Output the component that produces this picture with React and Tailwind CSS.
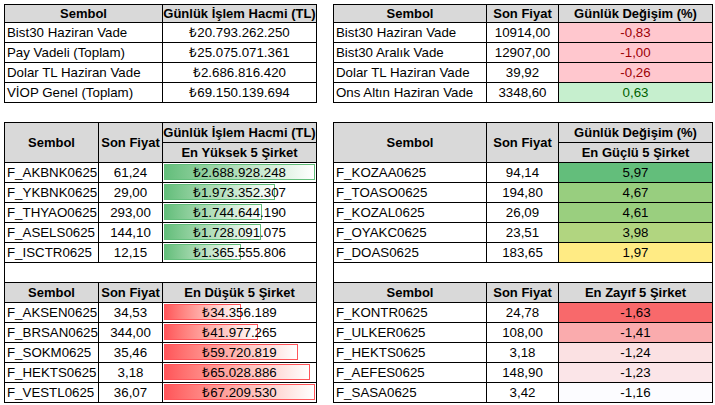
import React from "react";

const FONT = { fontFamily: '"Liberation Sans", Arial, sans-serif' };

function C({ children, className = "" }) {
  return (
    <div className={`border-r border-b border-black flex items-center overflow-hidden whitespace-nowrap ${className}`}>
      {children}
    </div>
  );
}

function H({ children, className = "" }) {
  return (
    <C className={`bg-[#d9d9d9] justify-center font-bold text-[13px] ${className}`}>{children}</C>
  );
}

function Bar({ value, max, kind, text }) {
  const w = Math.round((value / max) * 151);
  const green = kind === "green";
  return (
    <C className="relative justify-center">
      <div
        className={
          green
            ? "absolute left-[1px] top-[1px] h-[16px] border border-[#63be7b] bg-gradient-to-r from-[#63be7b] to-white"
            : "absolute left-[1px] top-[1px] h-[16px] border border-[#ff555a] bg-gradient-to-r from-[#ff555a] to-white"
        }
        style={{ width: w }}
      />
      <span className="relative">{text}</span>
    </C>
  );
}

const topLeft = [
  ["Bist30 Haziran Vade", "₺20.793.262.250"],
  ["Pay Vadeli (Toplam)", "₺25.075.071.361"],
  ["Dolar TL Haziran Vade", "₺2.686.816.420"],
  ["VİOP Genel (Toplam)", "₺69.150.139.694"],
];

const topRight = [
  ["Bist30 Haziran Vade", "10914,00", "-0,83", false],
  ["Bist30 Aralık Vade", "12907,00", "-1,00", false],
  ["Dolar TL Haziran Vade", "39,92", "-0,26", false],
  ["Ons Altın Haziran Vade", "3348,60", "0,63", true],
];

const high = [
  ["F_AKBNK0625", "61,24", 2688928248, "₺2.688.928.248"],
  ["F_YKBNK0625", "29,00", 1973352307, "₺1.973.352.307"],
  ["F_THYAO0625", "293,00", 1744644190, "₺1.744.644.190"],
  ["F_ASELS0625", "144,10", 1728091075, "₺1.728.091.075"],
  ["F_ISCTR0625", "12,15", 1365555806, "₺1.365.555.806"],
];

const low = [
  ["F_AKSEN0625", "34,53", 34356189, "₺34.356.189"],
  ["F_BRSAN0625", "344,00", 41977265, "₺41.977.265"],
  ["F_SOKM0625", "35,46", 59720819, "₺59.720.819"],
  ["F_HEKTS0625", "3,18", 65028886, "₺65.028.886"],
  ["F_VESTL0625", "36,07", 67209530, "₺67.209.530"],
];

const strong = [
  ["F_KOZAA0625", "94,14", "5,97", "bg-[#63be7b]"],
  ["F_TOASO0625", "194,80", "4,67", "bg-[#98ce7f]"],
  ["F_KOZAL0625", "26,09", "4,61", "bg-[#9acf7f]"],
  ["F_OYAKC0625", "23,51", "3,98", "bg-[#b1d580]"],
  ["F_DOAS0625", "183,65", "1,97", "bg-[#ffeb84]"],
];

const weak = [
  ["F_KONTR0625", "24,78", "-1,63", "bg-[#f8696b]"],
  ["F_ULKER0625", "108,00", "-1,41", "bg-[#faabad]"],
  ["F_HEKTS0625", "3,18", "-1,24", "bg-[#fbe1e3]"],
  ["F_AEFES0625", "148,90", "-1,23", "bg-[#fbe5e8]"],
  ["F_SASA0625", "3,42", "-1,16", "bg-[#fcfcff]"],
];

export default function App() {
  return (
    <div className="w-[715px] h-[405px] bg-white text-black text-[13.3px] overflow-hidden pt-[4px] pl-[4px]" style={FONT}>
      <div className="flex gap-[16px]">
        {/* top left */}
        <div className="grid grid-cols-[158px_154px] grid-rows-[18px_repeat(4,20px)] border-l border-t border-black w-[313px]">
          <H>Sembol</H>
          <H>Günlük İşlem Hacmi (TL)</H>
          {topLeft.map((r) => (
            <React.Fragment key={r[0]}>
              <C className="pl-[2px]">{r[0]}</C>
              <C className="justify-center">{r[1]}</C>
            </React.Fragment>
          ))}
        </div>
        {/* top right */}
        <div className="grid grid-cols-[153px_72px_154px] grid-rows-[18px_repeat(4,20px)] border-l border-t border-black w-[380px]">
          <H>Sembol</H>
          <H>Son Fiyat</H>
          <H>Günlük Değişim (%)</H>
          {topRight.map((r) => (
            <React.Fragment key={r[0]}>
              <C className="pl-[2px]">{r[0]}</C>
              <C className="justify-center">{r[1]}</C>
              <C className={r[3] ? "justify-center bg-[#c6efce] text-[#006100]" : "justify-center bg-[#ffc7ce] text-[#9c0006]"}>{r[2]}</C>
            </React.Fragment>
          ))}
        </div>
      </div>

      <div className="flex gap-[16px] mt-[19px]">
        {/* middle/bottom left */}
        <div className="grid grid-cols-[94px_64px_154px] auto-rows-[20px] border-l border-t border-black w-[313px]">
          <H className="row-span-2">Sembol</H>
          <H className="row-span-2">Son Fiyat</H>
          <H>Günlük İşlem Hacmi (TL)</H>
          <H>En Yüksek 5 Şirket</H>
          {high.map((r) => (
            <React.Fragment key={r[0]}>
              <C className="pl-[2px]">{r[0]}</C>
              <C className="justify-center">{r[1]}</C>
              <Bar value={r[2]} max={2688928248} kind="green" text={r[3]} />
            </React.Fragment>
          ))}
          <C className="col-span-3" />
          <H>Sembol</H>
          <H>Son Fiyat</H>
          <H>En Düşük 5 Şirket</H>
          {low.map((r) => (
            <React.Fragment key={r[0]}>
              <C className="pl-[2px]">{r[0]}</C>
              <C className="justify-center">{r[1]}</C>
              <Bar value={r[2]} max={67209530} kind="red" text={r[3]} />
            </React.Fragment>
          ))}
        </div>
        {/* middle/bottom right */}
        <div className="grid grid-cols-[153px_72px_154px] auto-rows-[20px] border-l border-t border-black w-[380px]">
          <H className="row-span-2">Sembol</H>
          <H className="row-span-2">Son Fiyat</H>
          <H>Günlük Değişim (%)</H>
          <H>En Güçlü 5 Şirket</H>
          {strong.map((r) => (
            <React.Fragment key={r[0]}>
              <C className="pl-[2px]">{r[0]}</C>
              <C className="justify-center">{r[1]}</C>
              <C className={`justify-center ${r[3]}`}>{r[2]}</C>
            </React.Fragment>
          ))}
          <C className="col-span-3" />
          <H>Sembol</H>
          <H>Son Fiyat</H>
          <H>En Zayıf 5 Şirket</H>
          {weak.map((r) => (
            <React.Fragment key={r[0]}>
              <C className="pl-[2px]">{r[0]}</C>
              <C className="justify-center">{r[1]}</C>
              <C className={`justify-center ${r[3]}`}>{r[2]}</C>
            </React.Fragment>
          ))}
        </div>
      </div>
    </div>
  );
}
